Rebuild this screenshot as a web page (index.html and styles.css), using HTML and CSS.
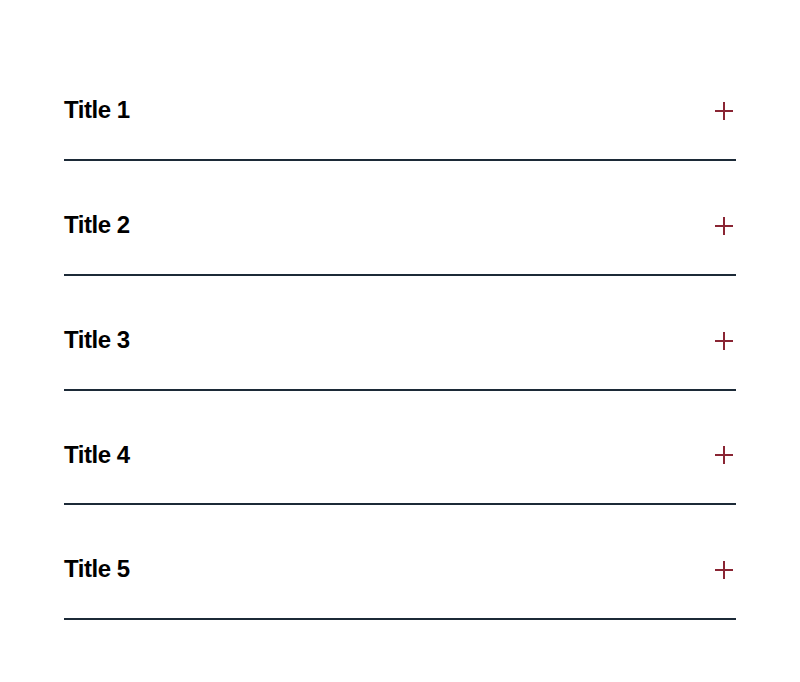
FILE: index.html
```html
<!DOCTYPE html>
<html lang="en">
<head>
<meta charset="utf-8">
<title>Accordion</title>
<link rel="stylesheet" href="styles.css">
</head>
<body>
<div class="accordion">
  <div class="item"><span class="title">Title 1</span><svg class="plus" viewBox="0 0 18 18"><path d="M9 0V18M0 9H18"/></svg></div>
  <div class="item"><span class="title">Title 2</span><svg class="plus" viewBox="0 0 18 18"><path d="M9 0V18M0 9H18"/></svg></div>
  <div class="item"><span class="title">Title 3</span><svg class="plus" viewBox="0 0 18 18"><path d="M9 0V18M0 9H18"/></svg></div>
  <div class="item"><span class="title">Title 4</span><svg class="plus" viewBox="0 0 18 18"><path d="M9 0V18M0 9H18"/></svg></div>
  <div class="item"><span class="title">Title 5</span><svg class="plus" viewBox="0 0 18 18"><path d="M9 0V18M0 9H18"/></svg></div>
</div>
</body>
</html>
```
FILE: styles.css
```css
html, body {
  margin: 0;
  background: #ffffff;
}
.accordion {
  padding: 46.25px 64px 0;
}
.item {
  display: flex;
  justify-content: space-between;
  align-items: flex-start;
  padding: 52px 0 36.75px;
  border-bottom: 2px solid #1c2a37;
}
.title {
  font-family: "Liberation Sans", Arial, sans-serif;
  font-weight: 700;
  font-size: 24px;
  line-height: 24px;
  letter-spacing: -0.45px;
  color: #000;
}
.plus {
  width: 18px;
  height: 18px;
  margin: 3.75px 3px 0 0;
  stroke: #8a2533;
  stroke-width: 2;
  fill: none;
}
```
